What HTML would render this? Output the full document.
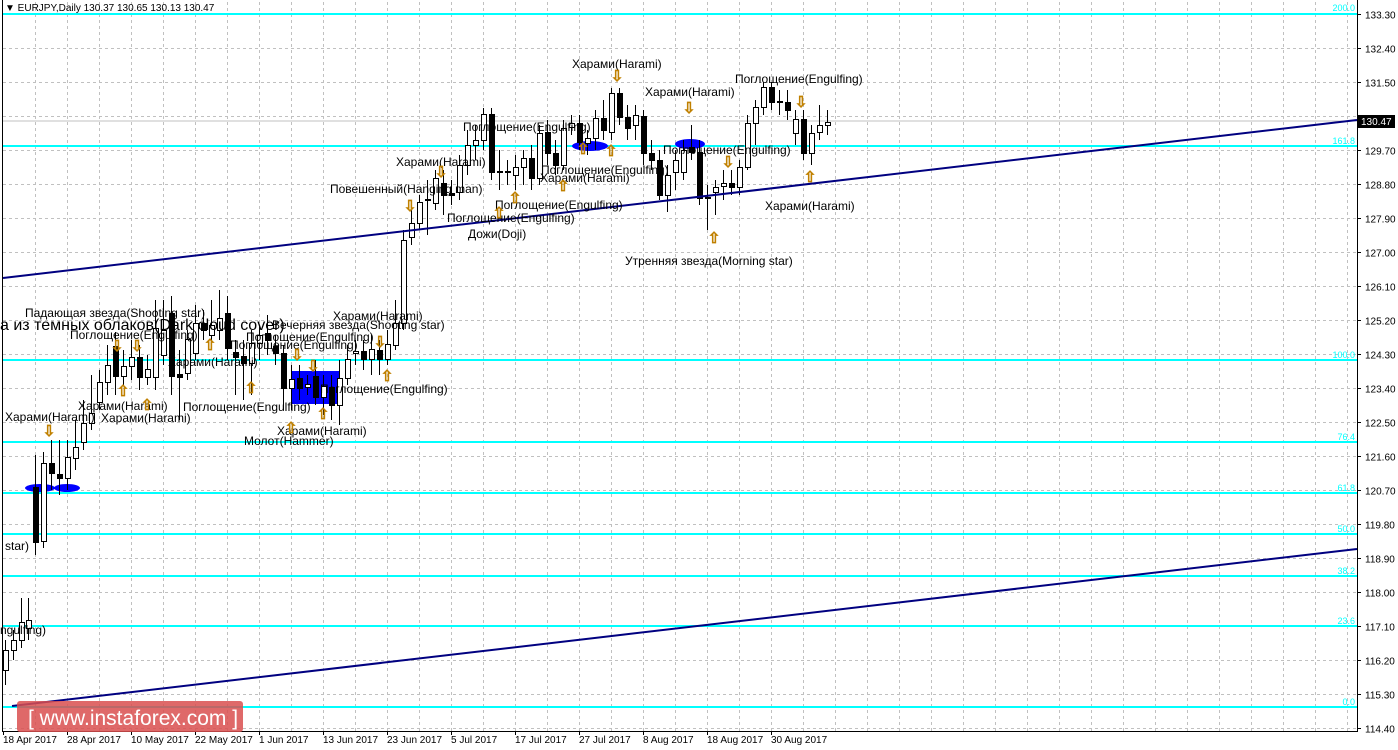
<!DOCTYPE html>
<html><head><meta charset="utf-8"><style>
html,body{margin:0;padding:0;background:#fff;width:1398px;height:750px;overflow:hidden}
svg{display:block;font-family:"Liberation Sans",sans-serif}
.l{font-size:12px;fill:#000}
.ax{font-size:10px;fill:#000}
.fib{font-size:9px;fill:#00ffff}
.ar{font-size:15px;fill:#fff;stroke:#c08000;stroke-width:0.8}
</style></head><body>
<svg id="s" width="1398" height="750" xmlns="http://www.w3.org/2000/svg">
<rect width="1398" height="750" fill="#fff"/>
<g id="grid"></g>
<g stroke="#00ffff" stroke-width="2">
<line x1="3" y1="14" x2="1357" y2="14"/><line x1="3" y1="146" x2="1357" y2="146"/>
<line x1="3" y1="360" x2="1357" y2="360"/><line x1="3" y1="442" x2="1357" y2="442"/>
<line x1="3" y1="493" x2="1357" y2="493"/><line x1="3" y1="534" x2="1357" y2="534"/>
<line x1="3" y1="576" x2="1357" y2="576"/><line x1="3" y1="626" x2="1357" y2="626"/>
<line x1="3" y1="707" x2="1357" y2="707"/>
</g>
<g class="fib" text-anchor="end">
<text x="1355" y="11">200.0</text><text x="1355" y="144">161.8</text><text x="1355" y="358">100.0</text>
<text x="1355" y="440">76.4</text><text x="1355" y="491">61.8</text><text x="1355" y="532">50.0</text>
<text x="1355" y="574">38.2</text><text x="1355" y="624">23.6</text><text x="1355" y="705">0.0</text>
</g>
<line x1="3" y1="121" x2="1357" y2="121" stroke="#c0c0c0" stroke-width="1"/>
<rect x="291" y="371" width="48" height="33" fill="#0000ff"/>
<ellipse cx="40" cy="488" rx="15" ry="4" fill="#0000ff"/>
<ellipse cx="67" cy="488" rx="13" ry="4" fill="#0000ff"/>
<ellipse cx="590" cy="146" rx="18" ry="5" fill="#0000ff"/>
<ellipse cx="690" cy="144" rx="15" ry="5" fill="#0000ff"/>
<g id="candles"></g>
<g stroke="#000080" stroke-width="2">
<line x1="3" y1="278" x2="1357" y2="120"/>
<line x1="12" y1="706" x2="1357" y2="549"/>
</g>
<g class="l">
<text x="572" y="68">Харами(Harami)</text>
<text x="645" y="96">Харами(Harami)</text>
<text x="735" y="83">Поглощение(Engulfing)</text>
<text x="463" y="131">Поглощение(Engulfing)</text>
<text x="396" y="166">Харами(Harami)</text>
<text x="541" y="174">Поглощение(Engulfing)</text>
<text x="540" y="182">Харами(Harami)</text>
<text x="663" y="154">Поглощение(Engulfing)</text>
<text x="330" y="193">Повешенный(Hanging man)</text>
<text x="495" y="209">Поглощение(Engulfing)</text>
<text x="447" y="222">Поглощение(Engulfing)</text>
<text x="468" y="238">Дожи(Doji)</text>
<text x="765" y="210">Харами(Harami)</text>
<text x="625" y="265">Утренняя звезда(Morning star)</text>
<text x="25" y="317">Падающая звезда(Shooting star)</text>
<text x="0" y="330" style="font-size:16px">а из темных облаков(Dark cloud cover)</text>
<text x="333" y="320">Харами(Harami)</text>
<text x="272" y="329">Вечерняя звезда(Shooting star)</text>
<text x="70" y="339">Поглощение(Engulfing)</text>
<text x="246" y="341">Поглощение(Engulfing)</text>
<text x="230" y="349">Поглощение(Engulfing)</text>
<text x="168" y="366">Харами(Harami)</text>
<text x="320" y="393">Поглощение(Engulfing)</text>
<text x="5" y="421">Харами(Harami)</text>
<text x="78" y="410">Харами(Harami)</text>
<text x="101" y="422">Харами(Harami)</text>
<text x="183" y="411">Поглощение(Engulfing)</text>
<text x="277" y="435">Харами(Harami)</text>
<text x="244" y="445">Молот(Hammer)</text>
<text x="5" y="550">star)</text>
<text x="0" y="634">ngulfing)</text>
</g>
<g class="ar" text-anchor="middle">
<text x="617" y="81">⇩</text><text x="689" y="113">⇩</text><text x="801" y="107">⇩</text>
<text x="583" y="154">⇧</text><text x="611" y="156">⇧</text><text x="441" y="177">⇩</text>
<text x="563" y="191">⇧</text><text x="728" y="167">⇩</text><text x="410" y="211">⇩</text>
<text x="515" y="203">⇧</text><text x="499" y="218">⇧</text><text x="810" y="182">⇧</text>
<text x="714" y="243">⇧</text><text x="117" y="351">⇩</text><text x="137" y="351">⇩</text>
<text x="49" y="436">⇩</text><text x="123" y="396">⇧</text><text x="147" y="410">⇧</text>
<text x="210" y="350">⇧</text><text x="251" y="393">⇧</text><text x="297" y="360">⇩</text>
<text x="313" y="371">⇩</text><text x="323" y="419">⇧</text><text x="387" y="381">⇧</text>
<text x="291" y="433">⇧</text><text x="380" y="347">⇩</text>
</g>
<g stroke="#000" stroke-width="1" fill="none">
<line x1="2.5" y1="0" x2="2.5" y2="731"/>
<line x1="1357.5" y1="0" x2="1357.5" y2="731"/>
<line x1="2" y1="731.5" x2="1358" y2="731.5"/>
</g>
<g id="ticks"></g>
<text x="5" y="11" class="ax">▼ EURJPY,Daily  130.37 130.65 130.13 130.47</text>
<rect x="1357" y="115" width="38" height="13" fill="#000"/>
<text x="1361" y="125" class="ax" style="fill:#fff">130.47</text>
<rect x="17" y="701" width="226" height="31" rx="3" fill="#d94f4f" opacity="0.85"/>
<text x="28" y="725" style="font-size:21px;fill:#fff">[ www.instaforex.com ]</text>
</svg>
<script>
var NS="http://www.w3.org/2000/svg";
function el(n,a,p){var e=document.createElementNS(NS,n);for(var k in a)e.setAttribute(k,a[k]);p.appendChild(e);return e;}
var g=document.getElementById("grid"),t=document.getElementById("ticks");
var prices=["133.30","132.40","131.50","130.60","129.70","128.80","127.90","127.00","126.10","125.20","124.30","123.40","122.50","121.60","120.70","119.80","118.90","118.00","117.10","116.20","115.30","114.40"];
for(var i=0;i<prices.length;i++){var y=14+34*i+0.5;
el("line",{x1:3,y1:y,x2:1357,y2:y,stroke:"#c0c0c0","stroke-dasharray":"3,3"},g);
el("line",{x1:1357,y1:y,x2:1361,y2:y,stroke:"#000"},t);
if(prices[i]!="130.60"){var tx=el("text",{x:1365,y:y+4,"class":"ax"},t);tx.textContent=prices[i];}}
for(var x=35.5;x<1357;x+=32){el("line",{x1:x,y1:2,x2:x,y2:731,stroke:"#c0c0c0","stroke-dasharray":"3,3"},g);}
var dates=["18 Apr 2017","28 Apr 2017","10 May 2017","22 May 2017","1 Jun 2017","13 Jun 2017","23 Jun 2017","5 Jul 2017","17 Jul 2017","27 Jul 2017","8 Aug 2017","18 Aug 2017","30 Aug 2017"];
for(var i=0;i<dates.length;i++){var x=3+64*i;el("line",{x1:x+0.5,y1:731,x2:x+0.5,y2:735,stroke:"#000"},t);
var tx=el("text",{x:x,y:743,"class":"ax"},t);tx.textContent=dates[i];}
var C=[[5,670,650,640,685],[13,650,640,630,660],[21,640,622,598,648],[28,628,620,598,640],
[35,487,542,455,555],[43,541,463,452,548],[51,463,473,440,490],[59,474,478,440,495],[67,478,457,440,490],[75,458,447,420,470],[83,442,423,400,450],[91,423,413,375,430],[99,402,382,370,410],[107,382,365,345,395],[115,346,376,332,395],[123,376,366,350,385],[131,366,357,340,380],[139,357,377,345,390],[147,377,369,355,385],[155,377,328,300,390],[163,355,330,300,365],[171,313,376,296,395],[179,374,377,350,420],[187,373,339,330,380],[195,353,323,305,360],[203,323,330,310,340],[211,335,325,300,345],[219,330,318,290,340],[227,313,348,296,360],[235,352,357,340,395],[243,356,363,340,400],[251,363,343,330,395],[259,343,335,325,360],[267,333,340,315,355],[275,346,353,335,365],[283,353,388,345,410],[291,388,379,365,410],[299,378,388,365,400],[307,387,384,375,395],[315,376,397,360,405],[323,397,386,375,415],[331,387,405,375,420],[339,405,378,360,425],[347,378,359,345,385],[355,353,351,340,365],[363,351,359,340,370],[371,359,349,335,375],[379,350,359,340,375],[387,359,344,330,365],[395,345,323,300,350],[403,323,240,230,330],[411,237,223,210,245],[419,223,202,195,230],[427,199,200,180,235],[435,203,178,170,210],[443,183,195,170,215],[451,193,195,180,205],[459,192,165,155,200],[467,165,145,130,175],[475,145,140,125,160],[483,140,114,108,150],[491,114,172,108,180],[499,171,172,150,190],[507,171,172,160,185],[515,175,167,155,190],[523,167,158,150,185],[531,158,178,145,190],[539,178,133,125,185],[547,132,153,120,165],[555,153,165,140,175],[563,165,128,120,170],[571,127,123,115,135],[579,123,142,115,150],[587,143,138,130,155],[595,138,118,110,150],[603,118,130,100,140],[611,132,93,88,140],[619,93,117,88,125],[627,117,128,105,140],[635,125,115,105,140],[643,116,153,110,165],[651,153,160,140,170],[659,160,195,150,200],[667,195,175,165,212],[675,172,160,150,190],[683,172,150,140,180],[691,147,152,125,160],[699,152,198,140,205],[707,197,198,185,230],[715,192,187,180,215],[723,186,183,170,200],[731,183,187,170,195],[739,187,167,160,195],[747,167,123,115,170],[755,123,107,100,145],[763,107,87,82,115],[771,87,102,82,110],[779,101,102,90,115],[787,102,110,90,120],[795,133,119,110,145],[803,119,153,110,160],[811,153,133,125,165],[819,132,125,105,140],[827,125,122,110,135]];
var cg=document.getElementById("candles");
C.forEach(function(c){var x=c[0],o=c[1],cl=c[2],h=c[3],l=c[4];
el("line",{x1:x+0.5,y1:h,x2:x+0.5,y2:l,stroke:"#000"},cg);
var top=Math.min(o,cl),bh=Math.max(Math.abs(o-cl),1);
el("rect",{x:x-1.5,y:top+0.5,width:5,height:bh,fill:(cl>o?"#000":"#fff"),stroke:"#000"},cg);});
</script>
</body></html>
